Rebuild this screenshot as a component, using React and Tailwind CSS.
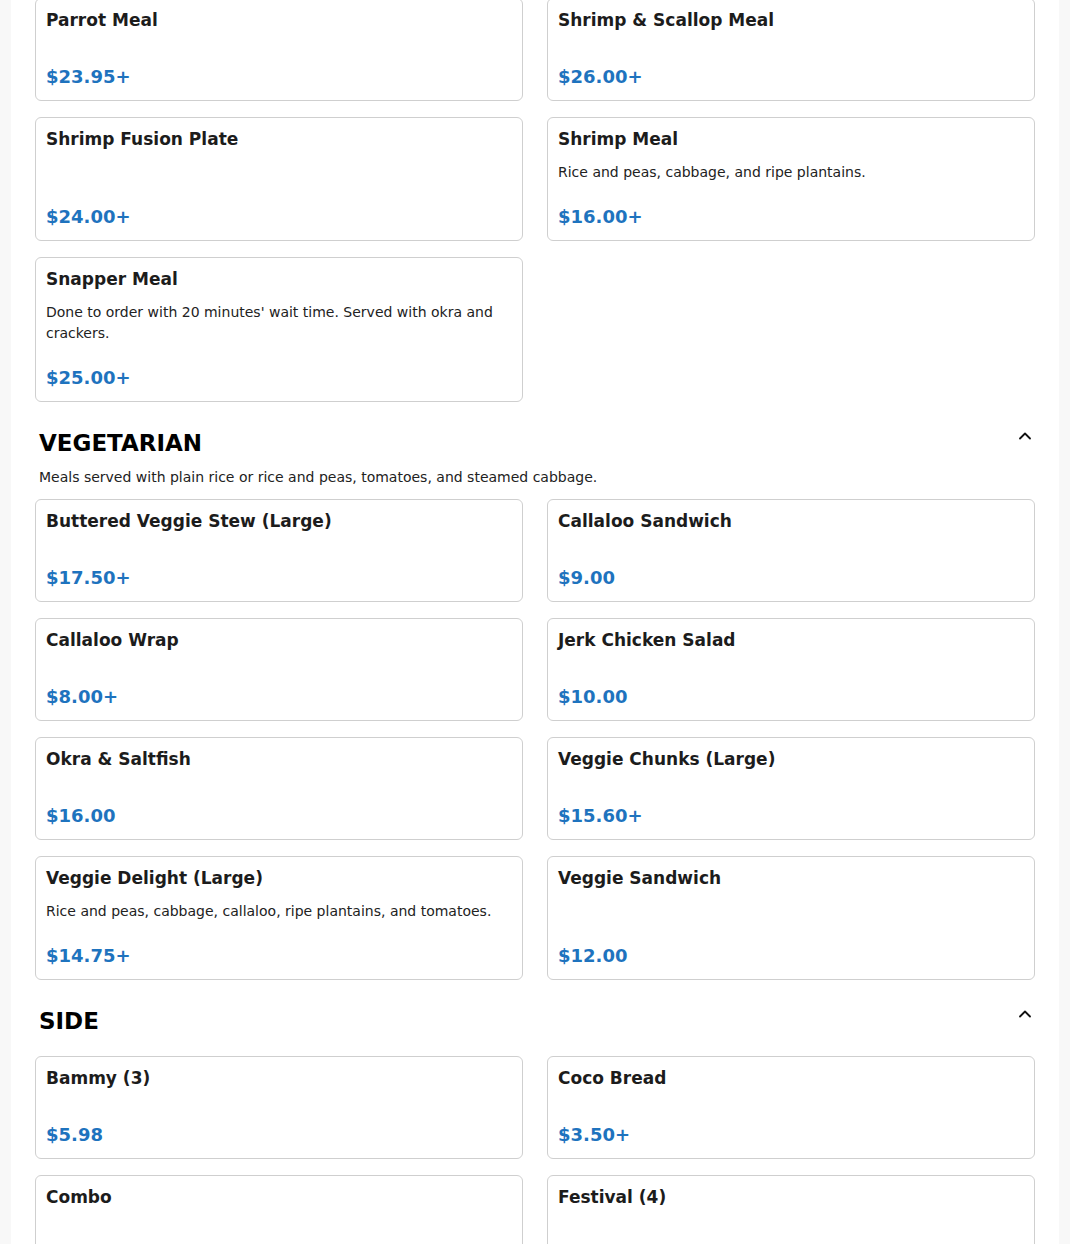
import { useState } from 'react';

const sections = [
  {
    id: 'seafood',
    hidden: true,
    items: [
      { name: 'Parrot Meal', price: '$23.95+' },
      { name: 'Shrimp & Scallop Meal', price: '$26.00+' },
      { name: 'Shrimp Fusion Plate', price: '$24.00+' },
      { name: 'Shrimp Meal', desc: 'Rice and peas, cabbage, and ripe plantains.', price: '$16.00+' },
      {
        name: 'Snapper Meal',
        desc: "Done to order with 20 minutes' wait time. Served with okra and crackers.",
        price: '$25.00+',
      },
    ],
  },
  {
    id: 'vegetarian',
    title: 'VEGETARIAN',
    desc: 'Meals served with plain rice or rice and peas, tomatoes, and steamed cabbage.',
    items: [
      { name: 'Buttered Veggie Stew (Large)', price: '$17.50+' },
      { name: 'Callaloo Sandwich', price: '$9.00' },
      { name: 'Callaloo Wrap', price: '$8.00+' },
      { name: 'Jerk Chicken Salad', price: '$10.00' },
      { name: 'Okra & Saltfish', price: '$16.00' },
      { name: 'Veggie Chunks (Large)', price: '$15.60+' },
      { name: 'Veggie Delight (Large)', desc: 'Rice and peas, cabbage, callaloo, ripe plantains, and tomatoes.', price: '$14.75+' },
      { name: 'Veggie Sandwich', price: '$12.00' },
    ],
  },
  {
    id: 'side',
    title: 'SIDE',
    items: [
      { name: 'Bammy (3)', price: '$5.98' },
      { name: 'Coco Bread', price: '$3.50+' },
      { name: 'Combo', price: '$10.00+' },
      { name: 'Festival (4)', price: '$5.00' },
    ],
  },
];

function ItemCard({ item }) {
  return (
    <div className="flex flex-col rounded-md border border-[#cfcfcf] bg-white px-[10px] pt-[10px] pb-3">
      <h3 className="mb-3 text-[17px] font-bold leading-[22px] text-[#1c1c1c]">{item.name}</h3>
      <p className="mb-[23px] text-[14px] leading-[21px] text-[#222]">{item.desc}</p>
      <div className="mt-auto text-[18px] font-bold leading-[22px] text-[#1e73be]">{item.price}</div>
    </div>
  );
}

function Chevron() {
  return (
    <svg width="12" height="8" viewBox="0 0 12 8" fill="none" className="mt-[3px]">
      <polyline points="1,6.5 6,1.5 11,6.5" stroke="#111" strokeWidth="1.8" strokeLinecap="round" strokeLinejoin="round" />
    </svg>
  );
}

export default function App() {
  const [open] = useState(true);

  return (
    <div className="min-h-screen bg-[#f8f8f8] font-['DejaVu_Sans',sans-serif]">
      <div className="mx-[11px] bg-white px-6 pb-10">
        {sections.map((section) => (
          <section key={section.id} className={`flex flex-col ${section.hidden ? '-mt-[2px]' : 'mt-[27px]'}`}>
            {/* Section heading */}
            {section.title && (
              <div className="mb-[9px] flex items-start justify-between px-1">
                <h2 className="text-[23px] font-bold leading-[29px] text-black">{section.title}</h2>
                <Chevron />
              </div>
            )}
            {section.desc && (
              <p className="px-1 text-[14px] leading-[21px] text-[#222]">{section.desc}</p>
            )}
            {open && (
              <div className={`grid grid-cols-2 gap-x-6 gap-y-4 ${section.title ? 'mt-[11px]' : ''}`}>
                {section.items.map((item) => (
                  <ItemCard key={item.name} item={item} />
                ))}
              </div>
            )}
          </section>
        ))}
      </div>
    </div>
  );
}
